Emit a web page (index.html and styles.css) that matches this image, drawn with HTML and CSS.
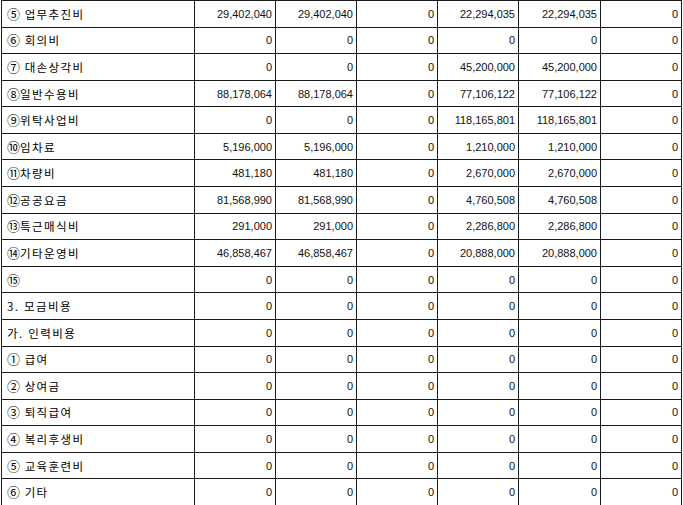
FILE: index.html
```html
<!DOCTYPE html>
<html lang="ko">
<head>
<meta charset="utf-8">
<link rel="stylesheet" href="styles.css">
</head>
<body>
<div class="wrap">
<table class="sheet">
<colgroup>
<col class="c-name"><col class="c-num"><col class="c-num"><col class="c-num"><col class="c-num"><col class="c-num6"><col class="c-num">
</colgroup>
<tbody>
<tr><td class="name"><span class="circ">⑤</span> 업무추진비</td><td>29,402,040</td><td>29,402,040</td><td>0</td><td>22,294,035</td><td>22,294,035</td><td>0</td></tr>
<tr><td class="name"><span class="circ">⑥</span> 회의비</td><td>0</td><td>0</td><td>0</td><td>0</td><td>0</td><td>0</td></tr>
<tr><td class="name"><span class="circ">⑦</span> 대손상각비</td><td>0</td><td>0</td><td>0</td><td>45,200,000</td><td>45,200,000</td><td>0</td></tr>
<tr><td class="name"><span class="circ">⑧</span>일반수용비</td><td>88,178,064</td><td>88,178,064</td><td>0</td><td>77,106,122</td><td>77,106,122</td><td>0</td></tr>
<tr><td class="name"><span class="circ">⑨</span>위탁사업비</td><td>0</td><td>0</td><td>0</td><td>118,165,801</td><td>118,165,801</td><td>0</td></tr>
<tr><td class="name"><span class="circ">⑩</span>임차료</td><td>5,196,000</td><td>5,196,000</td><td>0</td><td>1,210,000</td><td>1,210,000</td><td>0</td></tr>
<tr><td class="name"><span class="circ">⑪</span>차량비</td><td>481,180</td><td>481,180</td><td>0</td><td>2,670,000</td><td>2,670,000</td><td>0</td></tr>
<tr><td class="name"><span class="circ">⑫</span>공공요금</td><td>81,568,990</td><td>81,568,990</td><td>0</td><td>4,760,508</td><td>4,760,508</td><td>0</td></tr>
<tr><td class="name"><span class="circ">⑬</span>특근매식비</td><td>291,000</td><td>291,000</td><td>0</td><td>2,286,800</td><td>2,286,800</td><td>0</td></tr>
<tr><td class="name"><span class="circ">⑭</span>기타운영비</td><td>46,858,467</td><td>46,858,467</td><td>0</td><td>20,888,000</td><td>20,888,000</td><td>0</td></tr>
<tr><td class="name"><span class="circ">⑮</span></td><td>0</td><td>0</td><td>0</td><td>0</td><td>0</td><td>0</td></tr>
<tr><td class="name">3. 모금비용</td><td>0</td><td>0</td><td>0</td><td>0</td><td>0</td><td>0</td></tr>
<tr><td class="name">가. 인력비용</td><td>0</td><td>0</td><td>0</td><td>0</td><td>0</td><td>0</td></tr>
<tr><td class="name"><span class="circ">①</span> 급여</td><td>0</td><td>0</td><td>0</td><td>0</td><td>0</td><td>0</td></tr>
<tr><td class="name"><span class="circ">②</span> 상여금</td><td>0</td><td>0</td><td>0</td><td>0</td><td>0</td><td>0</td></tr>
<tr><td class="name"><span class="circ">③</span> 퇴직급여</td><td>0</td><td>0</td><td>0</td><td>0</td><td>0</td><td>0</td></tr>
<tr><td class="name"><span class="circ">④</span> 복리후생비</td><td>0</td><td>0</td><td>0</td><td>0</td><td>0</td><td>0</td></tr>
<tr><td class="name"><span class="circ">⑤</span> 교육훈련비</td><td>0</td><td>0</td><td>0</td><td>0</td><td>0</td><td>0</td></tr>
<tr><td class="name"><span class="circ">⑥</span> 기타</td><td>0</td><td>0</td><td>0</td><td>0</td><td>0</td><td>0</td></tr>
</tbody>
</table>
</div>
</body>
</html>
```

FILE: styles.css
```css
html, body {
  margin: 0;
  padding: 0;
  background: #ffffff;
}

.wrap {
  padding: 0 0 0 1px;
}

.sheet {
  border-collapse: collapse;
  table-layout: fixed;
  width: 680px;
  font-family: "Liberation Sans", "Noto Sans CJK KR", sans-serif;
  font-size: 11px;
  color: #000;
}

.c-name { width: 193px; }
.c-num { width: 81px; }
.c-num6 { width: 82px; }

.sheet tr {
  height: 26.58px;
}

.sheet td {
  border: 1px solid #1a1a1a;
  padding: 0 3px 0 4px;
  text-align: right;
  vertical-align: middle;
  white-space: nowrap;
  overflow: hidden;
  line-height: 14px;
  color: #111;
}

.sheet td.name {
  text-align: left;
  padding-left: 5px;
  font-family: "Noto Sans CJK KR", sans-serif;
  font-size: 11.5px;
  letter-spacing: 1.4px;
  color: #000;
}

.circ {
  font-size: 13px;
  letter-spacing: 0;
  margin-right: 0;
}
```
